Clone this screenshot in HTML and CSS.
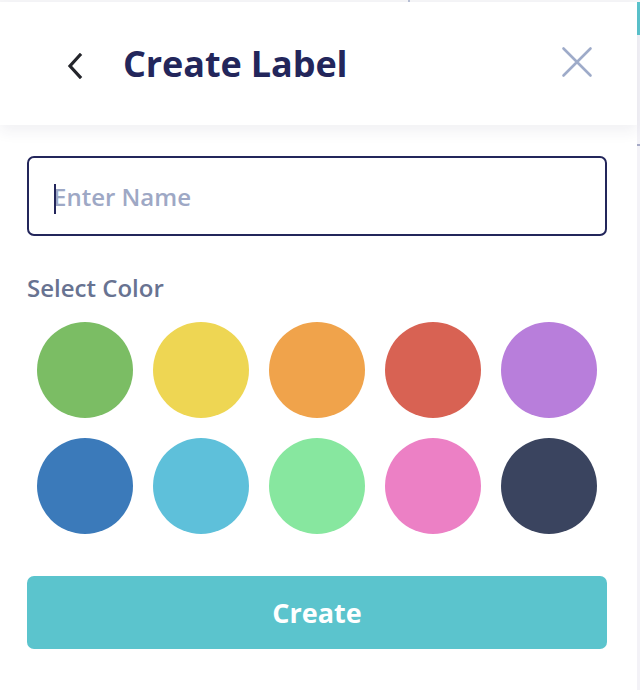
FILE: index.html
```html
<!DOCTYPE html>
<html>
<head>
<meta charset="utf-8">
<link rel="stylesheet" href="styles.css">
</head>
<body>
<div class="topstrip"><span class="tick"></span></div>
<div class="frame">
  <div class="panel">
    <header class="header">
      <button class="back" aria-label="Back">
        <svg width="18" height="26" viewBox="0 0 18 26"><path d="M14 2 L4 13 L14 24" fill="none" stroke="#24252b" stroke-width="3.2" stroke-linecap="square"/></svg>
      </button>
      <h1 class="title">Create Label</h1>
      <button class="close" aria-label="Close">
        <svg width="32" height="32" viewBox="0 0 32 32"><path d="M2.5 2.5 L29.5 29.5 M29.5 2.5 L2.5 29.5" fill="none" stroke="#9eabc9" stroke-width="2.6" stroke-linecap="round"/></svg>
      </button>
    </header>
    <main class="body">
      <div class="field"><span class="caret"></span><input class="name" type="text" placeholder="Enter Name"></div>
      <div class="label">Select Color</div>
      <div class="swatches">
        <span class="sw c1"></span><span class="sw c2"></span><span class="sw c3"></span><span class="sw c4"></span><span class="sw c5"></span>
        <span class="sw c6"></span><span class="sw c7"></span><span class="sw c8"></span><span class="sw c9"></span><span class="sw c10"></span>
      </div>
      <button class="create">Create</button>
    </main>
  </div>
  <div class="side"><span class="teal"></span><span class="mark"></span></div>
</div>
</body>
</html>
```
FILE: styles.css
```css
* { box-sizing: border-box; }
html, body { margin: 0; padding: 0; }
body {
  width: 640px;
  height: 690px;
  overflow: hidden;
  background: #ffffff;
  font-family: "Open Sans", "Noto Sans", sans-serif;
}
.topstrip {
  height: 2px;
  background: #f6f6f8;
  position: relative;
}
.tick {
  position: absolute;
  left: 408px;
  top: 0;
  width: 2px;
  height: 2px;
  background: #b9c1d6;
}
.frame {
  display: flex;
  height: 688px;
}
.panel {
  width: 637px;
  background: #fff;
  display: flex;
  flex-direction: column;
}
.side {
  width: 3px;
  background: #f3f2f7;
  position: relative;
}
.teal {
  display: block;
  height: 33px;
  background: #5bc4cd;
}
.mark {
  position: absolute;
  left: 0;
  top: 142px;
  width: 3px;
  height: 2px;
  background: #a6aac6;
}
.header {
  height: 123px;
  display: flex;
  align-items: center;
  padding: 0 0 0 66px;
  box-shadow: 0 6px 14px rgba(40, 45, 90, 0.07);
  position: relative;
  z-index: 1;
}
.back, .close {
  border: 0;
  background: none;
  padding: 0;
  display: flex;
}
.back { margin-right: 39px; margin-top: 4px; }
.title {
  margin: 0;
  font-size: 36px;
  font-weight: 700;
  color: #23265b;
  letter-spacing: -0.1px;
}
.close { margin-left: auto; margin-right: 44px; margin-top: -3px; }
.body {
  padding: 31px 30px 0 27px;
  display: flex;
  flex-direction: column;
}
.field {
  position: relative;
  height: 80px;
  border: 2px solid #23265b;
  border-radius: 7px;
  display: flex;
  align-items: center;
  padding-left: 24px;
}
.caret {
  position: absolute;
  left: 25px;
  top: 26px;
  width: 2px;
  height: 30px;
  background: #23265b;
}
.name {
  border: 0;
  outline: none;
  font-family: inherit;
  font-size: 24px;
  font-weight: 600;
  width: 100%;
  padding: 0;
  color: #23265b;
}
.name::placeholder { color: #9ea8c5; font-weight: 600; }
.label {
  margin-top: 37px;
  font-size: 24px;
  font-weight: 600;
  color: #687391;
  line-height: 30px;
}
.swatches {
  margin-top: 19px;
  padding-left: 10px;
  display: grid;
  grid-template-columns: repeat(5, 96px);
  column-gap: 20px;
  row-gap: 20px;
}
.sw { width: 96px; height: 96px; border-radius: 50%; display: block; }
.c1 { background: #7bbd64; }
.c2 { background: #eed653; }
.c3 { background: #f0a34b; }
.c4 { background: #d86253; }
.c5 { background: #b87edb; }
.c6 { background: #3b7aba; }
.c7 { background: #5ec0da; }
.c8 { background: #87e79f; }
.c9 { background: #ec80c5; }
.c10 { background: #3a445f; }
.create {
  margin-top: 42px;
  height: 73px;
  border: 0;
  border-radius: 7px;
  background: #5bc4cd;
  color: #fff;
  font-family: inherit;
  font-size: 27px;
  font-weight: 700;
}
```
